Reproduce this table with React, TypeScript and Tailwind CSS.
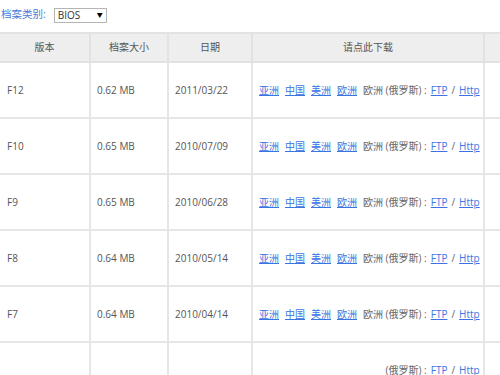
import React from 'react';

interface Row {
  version: string;
  size: string;
  date: string;
}

const rows: Row[] = [
  { version: 'F12', size: '0.62 MB', date: '2011/03/22' },
  { version: 'F10', size: '0.65 MB', date: '2010/07/09' },
  { version: 'F9', size: '0.65 MB', date: '2010/06/28' },
  { version: 'F8', size: '0.64 MB', date: '2010/05/14' },
  { version: 'F7', size: '0.64 MB', date: '2010/04/14' },
];

const font = { fontFamily: '"Open Sans", "Noto Sans CJK SC", sans-serif' };

function Links() {
  return (
    <div className="flex items-center whitespace-nowrap pl-[6px]">
      <a className="text-[#3b74e0] underline">亚洲</a>
      <a className="ml-[6px] text-[#3b74e0] underline">中国</a>
      <a className="ml-[6px] text-[#3b74e0] underline">美洲</a>
      <a className="ml-[6px] text-[#3b74e0] underline">欧洲</a>
      <span className="ml-[6px] text-[#666]">欧洲 (俄罗斯) :</span>
      <a className="ml-[4px] text-[#3b74e0] underline">FTP</a>
      <span className="mx-[4px] text-[#666]">/</span>
      <a className="text-[#3b74e0] underline">Http</a>
    </div>
  );
}

export default function App() {
  return (
    <div className="w-[500px] h-[375px] overflow-hidden bg-white text-[10px] text-[#555]" style={font}>
      {/* filter bar */}
      <div className="flex items-center h-[32px] pl-[1px] pb-[2px]">
        <span className="text-[#4a7bd8] text-[10.5px]">档案类别:</span>
        <div className="ml-[8px] flex items-center justify-between w-[53px] h-[15px] border border-[#b5b5b5] px-[3px] text-[#333]">
          <span>BIOS</span>
          <span className="text-[6px] text-black">▼</span>
        </div>
      </div>

      <table className="table-fixed border-collapse w-[520px]">
        <colgroup>
          <col className="w-[90px]" />
          <col className="w-[78px]" />
          <col className="w-[84px]" />
          <col className="w-[232px]" />
          <col className="w-[36px]" />
        </colgroup>
        <thead>
          <tr className="h-[29px] bg-[#eeeeee]">
            <th className="border-2 border-l-0 border-[#e2e2e2] font-normal text-center">版本</th>
            <th className="border-2 border-[#e2e2e2] font-normal text-center">档案大小</th>
            <th className="border-2 border-[#e2e2e2] font-normal text-center">日期</th>
            <th className="border-2 border-[#e2e2e2] font-normal text-center">请点此下载</th>
            <th className="border-2 border-[#e2e2e2]"></th>
          </tr>
        </thead>
        <tbody>
          {rows.map((r) => (
            <tr key={r.version} className="h-[56px]">
              <td className="border-2 border-l-0 border-[#e6e6e6] pl-[7px]">{r.version}</td>
              <td className="border-2 border-[#e6e6e6] pl-[6px]">{r.size}</td>
              <td className="border-2 border-[#e6e6e6] pl-[6px]">{r.date}</td>
              <td className="border-2 border-[#e6e6e6]">
                <Links />
              </td>
              <td className="border-2 border-[#e6e6e6]"></td>
            </tr>
          ))}
          <tr className="h-[56px]">
            <td className="border-2 border-l-0 border-[#e6e6e6]"></td>
            <td className="border-2 border-[#e6e6e6]"></td>
            <td className="border-2 border-[#e6e6e6]"></td>
            <td className="relative border-2 border-[#e6e6e6]">
              <Links />
              {/* watermark patch hiding part of the row */}
              <div className="absolute left-0 top-0 bottom-0 w-[131px] bg-white" />
            </td>
            <td className="border-2 border-[#e6e6e6]"></td>
          </tr>
        </tbody>
      </table>
    </div>
  );
}
